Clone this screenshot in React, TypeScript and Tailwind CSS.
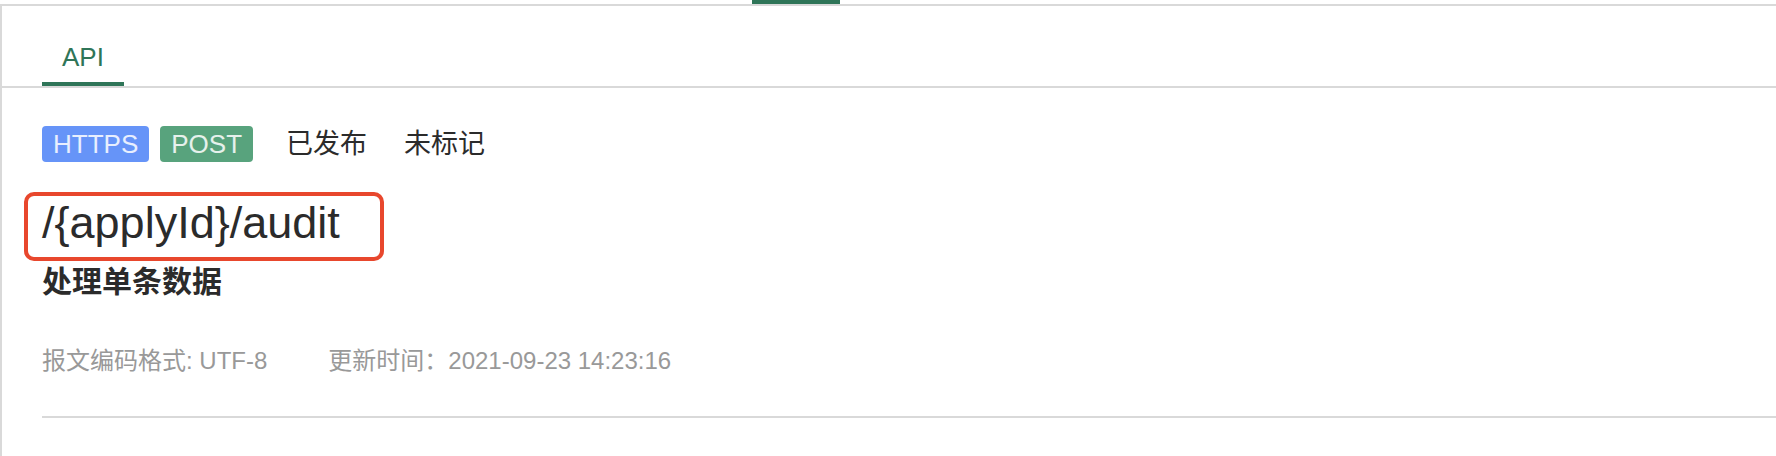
const font = "font-['Liberation_Sans','Noto_Sans_CJK_SC',sans-serif]";

/**
 * API detail header: tab strip, protocol / method badges, the path
 * (highlighted by a red annotation box), its description and meta info.
 */
export default function App() {
    return (
        <div className={`${font} flex min-h-[456px] w-full flex-col bg-white`}>
            {/* ink bar of the outer tab strip, cut off at the top edge */}
            <div className="h-[4px] shrink-0">
                <div className="ml-[752px] h-full w-[88px] bg-[#2f7558]" />
            </div>

            <div className="flex-1 border-l-2 border-t-2 border-[#d9d9d9]">
                {/* tab bar */}
                <div className="flex h-[82px] border-b-2 border-[#d9d9d9] pl-[40px]">
                    <div className="flex h-full items-end border-b-4 border-[#2f7558] px-[20px] pb-[10px]">
                        <span className="text-[26px] leading-[30px] text-[#2f7558]">API</span>
                    </div>
                </div>

                <div className="pl-[40px]">
                    {/* badges + status */}
                    <div className="mt-[38px] flex h-[36px] items-center">
                        <span className="flex h-[36px] items-center rounded bg-[#6694f8] px-[11px] text-[26px] leading-[30px] text-white/85">
                            HTTPS
                        </span>
                        <span className="ml-[11px] flex h-[36px] items-center rounded bg-[#58a37d] px-[11px] text-[26px] leading-[30px] text-white/85">
                            POST
                        </span>
                        <span className="ml-[33px] text-[27px] leading-[30px] text-[#2b2b2b]">已发布</span>
                        <span className="ml-[37px] text-[27px] leading-[30px] text-[#2b2b2b]">未标记</span>
                    </div>

                    {/* path, with the red highlight drawn over it */}
                    <div className="relative mt-[35px] w-fit">
                        <div className="text-[45px] leading-[52px] text-[#2b2b2b]">/{"{"}applyId{"}"}/audit</div>
                        <div className="pointer-events-none absolute -left-[18px] -top-[5px] h-[69px] w-[360px] rounded-[10px] border-4 border-[#e8472d]" />
                    </div>

                    <div className="mt-[12px] text-[30px] font-bold leading-[42px] text-[#2b2b2b]">处理单条数据</div>

                    {/* meta info */}
                    <div className="mt-[41px] flex text-[24px] leading-[34px] text-[#999]">
                        <span>报文编码格式: UTF-8</span>
                        <span className="ml-[61px]">更新时间：2021-09-23 14:23:16</span>
                    </div>

                    <div className="mt-[38px] h-[2px] bg-[#d9d9d9]" />
                </div>
            </div>
        </div>
    );
}
